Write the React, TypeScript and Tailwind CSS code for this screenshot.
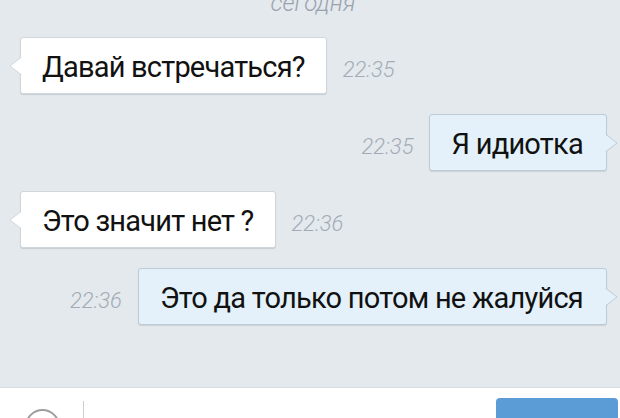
import React from "react";

function LeftTail() {
  return (
    <svg
      className="absolute left-[-12px] top-1/2 -translate-y-1/2"
      width="13"
      height="18"
      viewBox="0 0 13 18"
    >
      <polygon points="13,0 1,9 13,18" fill="#ffffff" />
      <polyline points="12.5,0 1,9 12.5,18" fill="none" stroke="#cfd6dc" strokeWidth="1" />
    </svg>
  );
}

function RightTail() {
  return (
    <svg
      className="absolute right-[-12px] top-1/2 -translate-y-1/2"
      width="13"
      height="18"
      viewBox="0 0 13 18"
    >
      <polygon points="0,0 12,9 0,18" fill="#e4f1fb" />
      <polyline points="0.5,0 12,9 0.5,18" fill="none" stroke="#bccbd8" strokeWidth="1" />
    </svg>
  );
}

function Time({ t }: { t: string }) {
  return (
    <span className="text-[22px] leading-none italic font-light text-[#a3acb6]">{t}</span>
  );
}

function Incoming({ text, time }: { text: string; time: string }) {
  return (
    <div className="flex items-baseline gap-[16px] pl-[20px]">
      <div className="relative bg-white border border-[#cfd6dc] rounded-[3px] pl-[21px] pr-[21px] pt-[12px] pb-[8px] text-[29px] leading-[35px] tracking-[-0.8px] text-[#111] shadow-[0_1px_1px_rgba(0,0,0,0.12)]">
        <LeftTail />
        {text}
      </div>
      <Time t={time} />
    </div>
  );
}

function Outgoing({ text, time }: { text: string; time: string }) {
  return (
    <div className="flex items-baseline justify-end gap-[16px] pr-[13px]">
      <Time t={time} />
      <div className="relative bg-[#e4f1fb] border border-[#bccbd8] rounded-[3px] pl-[21px] pr-[23px] pt-[12px] pb-[8px] text-[29px] leading-[35px] tracking-[-0.75px] text-[#111] shadow-[0_1px_1px_rgba(0,0,0,0.1)]">
        <RightTail />
        {text}
      </div>
    </div>
  );
}

export default function App() {
  return (
    <div className="w-[620px] h-[418px] overflow-hidden flex flex-col bg-[#e4e9ee] font-['Roboto',sans-serif]">
      <div className="h-[387px] flex-none flex flex-col">
        <div className="-mt-[8px] h-[22px] text-center text-[24px] leading-[22px] italic font-light text-[#9aa3ad] pl-[6px]">
          сегодня
        </div>
        <div className="mt-[23px] flex flex-col gap-[20px]">
          <Incoming text="Давай встречаться?" time="22:35" />
          <Outgoing text="Я идиотка" time="22:35" />
          <Incoming text="Это значит нет ?" time="22:36" />
          <Outgoing text="Это да только потом не жалуйся" time="22:36" />
        </div>
      </div>
      <div className="flex-1 bg-white border-t border-[#d6dde3] flex items-start">
        <div className="ml-[25px] mt-[21px] w-[35px] h-[35px] rounded-full border-2 border-[#9e9e9e] flex-none" />
        <div className="ml-[23px] mt-[13px] w-px h-[30px] bg-[#cfcfcf] flex-none" />
        <div className="ml-auto mr-[2px] mt-[10px] w-[122px] h-[30px] rounded-[4px] bg-[#5b9bd6] flex-none" />
      </div>
    </div>
  );
}
